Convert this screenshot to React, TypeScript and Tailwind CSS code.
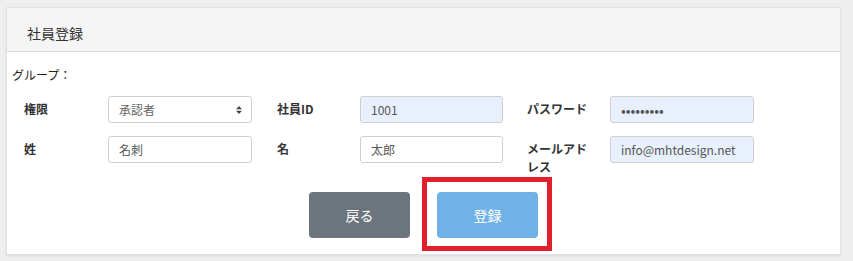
import React from 'react';

const font = { fontFamily: '"Noto Sans CJK JP", "Noto Sans", sans-serif' };

function Field({ label, children, labelW, inputW }: { label: string; children: React.ReactNode; labelW: string; inputW: string }) {
  return (
    <div className="flex items-start">
      <div className={`${labelW} pt-[4px] pr-[12px] text-[12px] leading-[18px] font-bold text-[#333]`}>{label}</div>
      <div className={inputW}>{children}</div>
    </div>
  );
}

const inputCls =
  'block w-full h-[27px] px-[10px] rounded-[3px] border border-[#cfcfcf] text-[12px] text-[#555] outline-none';

export default function App() {
  return (
    <div className="h-[261px] bg-[#eeeeee] pt-[7px] pl-[6px] pr-[12px] overflow-hidden" style={font}>
      <div className="bg-white border border-[#e2e2e2] shadow-[0_1px_2px_rgba(0,0,0,0.08)] h-[248px]">
        <div className="h-[44px] bg-[#f5f5f5] border-b border-[#d6d6d6] pl-[20px] pt-[15px] text-[14px] leading-[20px] text-[#333]">
          社員登録
        </div>

        <div className="pl-[5px] pt-[14px] text-[12px] leading-[18px] text-[#222]">グループ：</div>

        <div className="pl-[17px] mt-[12px] flex flex-col gap-[13px]">
          <div className="flex">
            <Field label="権限" labelW="w-[84px]" inputW="w-[144px]">
              <div className="relative">
                <select
                  defaultValue="承認者"
                  className={`${inputCls} appearance-none bg-white text-[#666]`}
                  style={font}
                >
                  <option>承認者</option>
                  <option>一般</option>
                </select>
                <svg className="absolute right-[10px] top-[10px]" width="6" height="8" viewBox="0 0 6 8">
                  <path d="M0 3.2 L3 0 L6 3.2 Z M0 4.8 L3 8 L6 4.8 Z" fill="#444" />
                </svg>
              </div>
            </Field>
            <div className="ml-[25px]">
              <Field label="社員ID" labelW="w-[83px]" inputW="w-[143px]">
                <input readOnly value="1001" className={`${inputCls} bg-[#e8f0fe]`} style={font} />
              </Field>
            </div>
            <div className="ml-[24px]">
              <Field label="パスワード" labelW="w-[83px]" inputW="w-[144px]">
                <input
                  readOnly
                  type="password"
                  value="123456789"
                  className={`${inputCls} bg-[#e8f0fe] text-[#111] text-[14px]`}
                />
              </Field>
            </div>
          </div>

          <div className="flex">
            <Field label="姓" labelW="w-[84px]" inputW="w-[144px]">
              <input readOnly value="名刺" className={`${inputCls} bg-white`} style={font} />
            </Field>
            <div className="ml-[25px]">
              <Field label="名" labelW="w-[83px]" inputW="w-[143px]">
                <input readOnly value="太郎" className={`${inputCls} bg-white`} style={font} />
              </Field>
            </div>
            <div className="ml-[24px]">
              <Field label="メールアドレス" labelW="w-[83px]" inputW="w-[144px]">
                <input readOnly value="info@mhtdesign.net" className={`${inputCls} bg-[#e8f0fe]`} style={font} />
              </Field>
            </div>
          </div>
        </div>

        <div className="mt-[16px] flex justify-center gap-[27px]">
          <button className="w-[101px] h-[46px] rounded-[4px] bg-[#6c757d] text-white text-[14px]" style={font}>
            戻る
          </button>
          <div className="relative">
            <button className="w-[101px] h-[46px] rounded-[4px] bg-[#70b2e8] text-white text-[14px]" style={font}>
              登録
            </button>
            <div className="absolute left-[-15px] top-[-15px] w-[130px] h-[74px] border-[5px] border-[#e0202b] pointer-events-none" />
          </div>
        </div>
      </div>
    </div>
  );
}
